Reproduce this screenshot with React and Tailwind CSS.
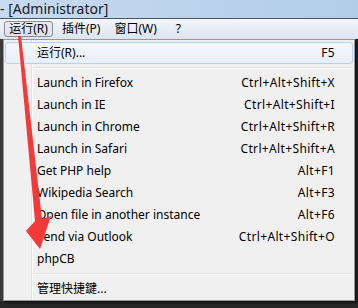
import React from "react";

const items = [
  ["Launch in Firefox", "Ctrl+Alt+Shift+X"],
  ["Launch in IE", "Ctrl+Alt+Shift+I"],
  ["Launch in Chrome", "Ctrl+Alt+Shift+R"],
  ["Launch in Safari", "Ctrl+Alt+Shift+A"],
  ["Get PHP help", "Alt+F1"],
  ["Wikipedia Search", "Alt+F3"],
  ["Open file in another instance", "Alt+F6"],
  ["Send via Outlook", "Ctrl+Alt+Shift+O"],
  ["phpCB", ""],
];

function Item({ label, shortcut, active }) {
  return (
    <div
      className={
        "mx-[1px] h-[22px] flex items-center justify-between pl-[31px] pr-[17px] rounded-[3px] border relative " +
        (active
          ? "border-[#b4d2f2] bg-gradient-to-b from-[#f4f8fd] to-[#e7eff9]"
          : "border-transparent")
      }
    >
      <span>{label}</span>
      <span className="tracking-[0.35px]">{shortcut}</span>
    </div>
  );
}

function Sep() {
  return (
    <div className="h-[8px] flex flex-col justify-center pl-[28px] pr-[2px]">
      <div className="h-px bg-[#e0e0e0]" />
      <div className="h-px bg-white" />
    </div>
  );
}

export default function App() {
  return (
    <div
      className="w-[358px] h-[308px] bg-[#262626] relative overflow-hidden text-[12px] text-black leading-none"
      style={{ fontFamily: "'Noto Sans', 'Noto Sans CJK SC', sans-serif" }}
    >
      <div className="h-[18px] bg-gradient-to-r from-[#c6dbf1] via-[#bcd3ec] to-[#b3cde9] flex items-center text-[14px] text-[#1a1a1a]">
        <span>- [Administrator]</span>
      </div>
      <div className="h-px bg-[#4b5760]" />
      <div className="h-[20px] bg-gradient-to-b from-[#f3f6fb] to-[#dde5f0] flex items-center">
        <div className="ml-[4px] h-[16px] w-[49px] border border-[#8a8d91] rounded-[3px] bg-gradient-to-b from-[#e9edf2] to-[#dce2ea] flex items-center justify-center">
          运行(R)
        </div>
        <span className="ml-[9px]">插件(P)</span>
        <span className="ml-[14px]">窗口(W)</span>
        <span className="ml-[19px]">?</span>
      </div>
      <div className="flex">
        <div className="w-[3px] h-[262px] bg-[#3a3a3a]" />
        <div className="w-[352px] h-[262px] border border-[#979797] bg-[#f0f0f0] pt-[2px] relative shadow-[2px_2px_2px_rgba(0,0,0,0.5)]">
          <div className="absolute left-[27px] top-0 bottom-0 w-[2px] flex">
            <div className="w-px bg-[#e2e3e3]" />
            <div className="w-px bg-white" />
          </div>
          <Item label="运行(R)..." shortcut="F5" active />
          <Sep />
          {items.map(([l, s]) => (
            <Item key={l} label={l} shortcut={s} />
          ))}
          <Sep />
          <Item label="管理快捷鍵..." shortcut="" />
        </div>
      </div>
      <svg className="absolute left-0 top-0 pointer-events-none" width="358" height="308">
        <polygon
          points="18,36 21,36 42,219 51,216 40,249 26,231 35,221"
          fill="#f23a3a"
        />
      </svg>
    </div>
  );
}
